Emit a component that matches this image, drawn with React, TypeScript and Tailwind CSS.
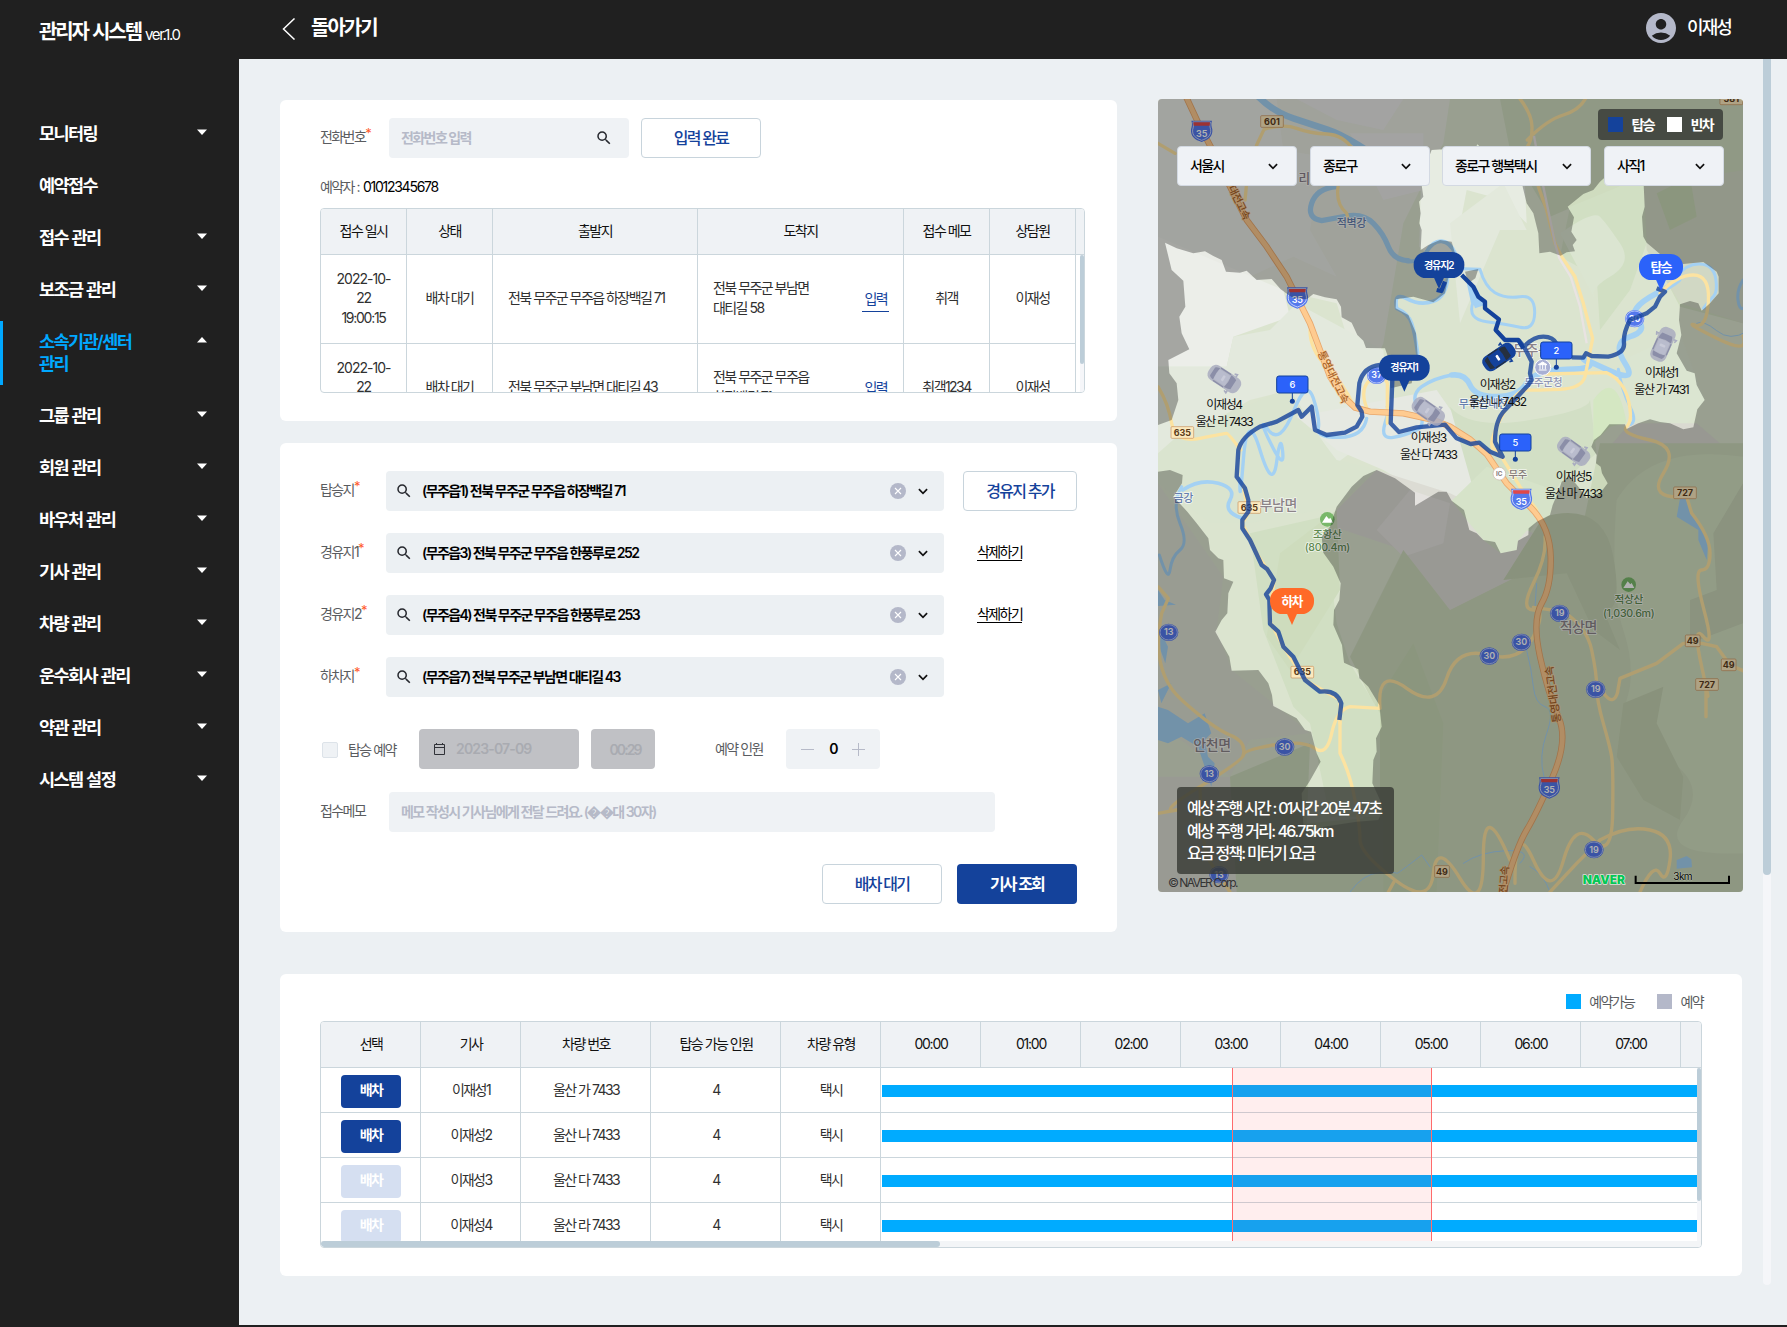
import React from "react";
import { MdAccountCircle, MdSearch } from "react-icons/md";

const MENU: { label: string; caret: boolean; active?: boolean }[] = [
  { label: "모니터링", caret: true },
  { label: "예약접수", caret: false },
  { label: "접수 관리", caret: true },
  { label: "보조금 관리", caret: true },
  { label: "소속기관/센터 관리", caret: true, active: true },
  { label: "그룹 관리", caret: true },
  { label: "회원 관리", caret: true },
  { label: "바우처 관리", caret: true },
  { label: "기사 관리", caret: true },
  { label: "차량 관리", caret: true },
  { label: "운수회사 관리", caret: true },
  { label: "약관 관리", caret: true },
  { label: "시스템 설정", caret: true },
];

function Sidebar() {
  return (
    <aside className="flex w-[239px] shrink-0 flex-col bg-[#202020] text-white">
      <div className="flex h-[108px] items-start pl-[39px] pt-[19px] leading-[26px]">
        <span className="text-[20px] font-semibold tracking-[-0.105em]! [word-spacing:0.06em]!">관리자 시스템</span>
        <span className="ml-1 pt-[3px] text-[15px] tracking-[-0.09em]!">ver.1.0</span>
      </div>
      <nav className="flex flex-col">
        {MENU.map((m) => (
          <div
            key={m.label}
            className={
              "my-[5px] flex border-l-[3px] py-[10px] pl-[36px] pr-[32px] " +
              (m.active ? "border-[#00a8ff]" : "border-transparent")
            }
          >
            <span
              className={
                "w-[110px] text-[17.5px] font-semibold leading-[22px] break-keep tracking-[-0.09em]! [word-spacing:0.04em]! " +
                (m.active ? "text-[#00a8ff]" : "text-white")
              }
            >
              {m.label}
            </span>
            {m.caret && (
              <svg viewBox="0 0 10 6" className="ml-auto mt-[6px] h-[6px] w-[10px]" fill="#fff">
                <path d={m.active ? "M0 5.5 5 0l5 5.5z" : "M0 .5h10L5 6z"} />
              </svg>
            )}
          </div>
        ))}
      </nav>
    </aside>
  );
}

function Header() {
  return (
    <header className="flex h-[59px] shrink-0 items-center bg-[#202020] pl-[43px] pr-[56px] text-white">
      <svg viewBox="0 0 14 22" className="-mt-[2px] h-[22px] w-[14px]" fill="none" stroke="#fff" strokeWidth="1.5">
        <path d="M12.5 .5 1.5 11l11 10.5" />
      </svg>
      <span className="-mt-[3px] ml-[15px] text-[20px] font-semibold leading-7 tracking-[-0.1em]!">돌아가기</span>
      <div className="-mt-[3px] ml-auto flex items-center gap-2">
        <MdAccountCircle className="size-[36px] text-[#b4b8c9]" />
        <span className="text-[18px] font-medium leading-7 tracking-[-0.105em]!">이재성</span>
      </div>
    </header>
  );
}

function Label({ text, star }: { text: string; star?: boolean }) {
  return (
    <span className="flex shrink-0 text-[14px] leading-5 text-[#5a5c60]">
      {text}
      {star && <span className="-mt-[4px] text-[13px] leading-5 text-[#ff5a2c]">*</span>}
    </span>
  );
}

function OutlineButton({ text, className }: { text: string; className: string }) {
  return (
    <button
      className={
        "flex h-10 items-center justify-center rounded border border-[#c8d4dc] bg-white pb-px text-[16px] font-medium leading-5 text-[#14429b] " +
        className
      }
    >
      {text}
    </button>
  );
}

function Chevron({ className = "" }: { className?: string }) {
  return (
    <svg viewBox="0 0 10 7" className={"h-[7px] w-[10px] shrink-0 " + className} fill="none" stroke="#111" strokeWidth="1.7">
      <path d="M.9 1.2 5 5.3l4.1-4.1" />
    </svg>
  );
}

const BOOKINGS = [
  { time: ["2022-10-", "22", "19:00:15"], from: "전북 무주군 무주읍 하장백길 71", to: ["전북 무주군 부남면", "대티길 58"], memo: "취객" },
  { time: ["2022-10-", "22", "19:00:15"], from: "전북 무주군 부남면 대티길 43", to: ["전북 무주군 무주읍", "하장백길 71"], memo: "취객1234" },
];

const BOOKING_GRID = "grid grid-cols-[86px_86px_205px_206px_86px_86px]";
const CELL = "flex items-center border-r border-[#cbd6dc] pb-0.5 text-[14px] leading-[19.6px]";

function CallerCard() {
  return (
    <section className="h-[321px] rounded-md bg-white pl-10 pt-[18px]">
      <div className="flex h-10 items-center">
        <div className="w-[69px] pb-[3px]">
          <Label text="전화번호" star />
        </div>
        <div className="flex h-10 w-60 items-center justify-between rounded bg-[#eff2f5] pl-3 pr-4">
          <span className="text-[14px] font-bold leading-5 text-[#b6bac8]">전화번호 입력</span>
          <MdSearch className="size-[18px] text-[#26282e]" />
        </div>
        <OutlineButton text="입력 완료" className="ml-3 w-[120px]" />
      </div>
      <p className="mt-[19px] flex text-[14px] leading-5 text-[#5a5c60]">
        예약자 :<span className="ml-[4px] text-black tracking-[-0.09em]!">01012345678</span>
      </p>
      <div className="mt-[11px] flex h-[185px] w-[765px] flex-col overflow-hidden rounded border border-[#cbd6dc]">
        <div className="flex h-[46px] shrink-0 border-b border-[#cbd6dc] bg-[#eff2f5]">
          <div className={BOOKING_GRID}>
            {["접수 일시", "상태", "출발지", "도착지", "접수 메모", "상담원"].map((h) => (
              <div key={h} className={CELL + " justify-center text-[#111]"}>
                {h}
              </div>
            ))}
          </div>
        </div>
        <div className="flex min-h-0 flex-1 overflow-hidden">
          <div className="text-[#303030]">
            {BOOKINGS.map((b, i) => (
              <div key={i} className={BOOKING_GRID + " h-[89px] border-b border-[#cbd6dc]"}>
                <div className={CELL + " flex-col justify-center"}>
                  {b.time.map((t) => (
                    <span key={t} className={t.endsWith("-") ? "tracking-[-0.07em]!" : "tracking-[-0.09em]!"}>
                      {t}
                    </span>
                  ))}
                </div>
                <div className={CELL + " justify-center"}>배차 대기</div>
                <div className={CELL + " pl-[15px]"}>{b.from}</div>
                <div className={CELL + " justify-between pl-[15px] pr-[14px]"}>
                  <span>
                    {b.to[0]}
                    <br />
                    {b.to[1]}
                  </span>
                  <span className="mt-[5px] border-b border-[#14429b] px-[2px] pb-[2px] text-[#14429b]">입력</span>
                </div>
                <div className={CELL + " justify-center"}>{b.memo}</div>
                <div className={CELL + " justify-center"}>이재성</div>
              </div>
            ))}
          </div>
          <div className="ml-auto h-full w-1 bg-[#f5f6f9]">
            <div className="h-[109px] w-1 rounded-sm bg-[#bccdd8]" />
          </div>
        </div>
      </div>
    </section>
  );
}

const STOPS = [
  { label: "탑승지", value: "(무주읍1) 전북 무주군 무주읍 하장백길 71", action: "add" },
  { label: "경유지1", value: "(무주읍3) 전북 무주군 무주읍 한풍루로 252", action: "del" },
  { label: "경유지2", value: "(무주읍4) 전북 무주군 무주읍 한풍루로 253", action: "del" },
  { label: "하차지", value: "(무주읍7) 전북 무주군 부남면 대티길 43", action: "" },
];

function TripCard() {
  return (
    <section className="h-[489px] rounded-md bg-white pl-10 pr-10 pt-7">
      <div className="flex flex-col gap-[22px]">
        {STOPS.map((s) => (
          <div key={s.label} className="flex h-10 items-center">
            <div className="w-[66px] pb-[3px]">
              <Label text={s.label} star />
            </div>
            <div className="flex h-10 w-[558px] items-center rounded bg-[#ecf0f3] pl-[9px] pr-4">
              <MdSearch className="size-[18px] text-[#26282e]" />
              <span className="ml-[9px] text-[14px] font-semibold leading-5 text-black">{s.value}</span>
              <svg viewBox="0 0 16 16" className="ml-auto size-4">
                <circle cx="8" cy="8" r="8" fill="#b4b8c9" />
                <path d="m5 5 6 6m0-6-6 6" stroke="#fff" strokeWidth="1.1" />
              </svg>
              <Chevron className="ml-3" />
            </div>
            {s.action === "add" && <OutlineButton text="경유지 추가" className="ml-[19px] w-[114px]" />}
            {s.action === "del" && (
              <span className="-mt-0.5 ml-[33px] border-b border-black text-[14px] leading-[17px] text-black">삭제하기</span>
            )}
          </div>
        ))}
      </div>
      <div className="mt-8 flex h-10 items-center">
        <span className="ml-[2px] mt-[2px] size-4 rounded-[2px] border border-[#dde3e9] bg-[#eff2f5]" />
        <div className="ml-[10px] w-[71px] pt-px">
          <Label text="탑승 예약" />
        </div>
        <div className="flex h-10 w-40 items-center rounded bg-[#c0c1c5] pl-[15px]">
          <svg viewBox="0 0 11 12" className="h-3 w-[11px]" fill="none" stroke="#303238" strokeWidth="1">
            <path d="M.5 1.5h10v10H.5zM.5 4.5h10M2.5 0v2M8.500 0v2" />
          </svg>
          <span className="ml-[11px] text-[14px] font-semibold leading-5 text-[#a9abb1] tracking-[-0.06em]!">2023-07-09</span>
        </div>
        <div className="ml-3 flex h-10 w-16 items-center justify-center rounded bg-[#c0c1c5] text-[14px] font-semibold text-[#a9abb1]">
          <span className="ml-1 tracking-[-0.14em]!">00:29</span>
        </div>
        <div className="ml-[60px] w-[71px]">
          <Label text="예약 인원" />
        </div>
        <div className="flex h-10 w-[94px] items-center justify-center gap-[15px] rounded bg-[#eff2f5]">
          <span className="h-px w-[13px] bg-[#b6bac8]" />
          <span className="text-[14px] font-semibold leading-5 text-black">0</span>
          <svg viewBox="0 0 13 13" className="size-[13px]" stroke="#b6bac8">
            <path d="M0 6.5h13M6.5 0v13" />
          </svg>
        </div>
      </div>
      <div className="mt-[23px] flex h-10 items-center">
        <div className="w-[69px] pb-[3px]">
          <Label text="접수메모" />
        </div>
        <div className="flex h-10 w-[606px] items-center rounded bg-[#eff2f5] pl-3">
          <span className="text-[14px] font-semibold leading-5 text-[#b6bac8]">
            메모 작성시 기사님에게 전달 드려요. (��대 30자)
          </span>
        </div>
      </div>
      <div className="mt-8 flex justify-end gap-[15px]">
        <OutlineButton text="배차 대기" className="w-[120px]" />
        <button className="flex h-10 w-[120px] items-center justify-center rounded bg-[#14429b] pb-px text-[16px] font-semibold leading-5 text-white">
          기사 조회
        </button>
      </div>
    </section>
  );
}

type Pt = { x: number; y: number };

function RoundBadge({ x, y, n }: Pt & { n: string }) {
  return (
    <g transform={`translate(${x} ${y})`}>
      <ellipse rx="29" ry="26" fill="#5478ec" />
      <ellipse rx="26" ry="23" fill="#5478ec" stroke="#dfe6ff" strokeWidth="2" />
      <text y="9" textAnchor="middle" fontSize="27" fontWeight="600" fill="#fff" className="tracking-normal!">
        {n}
      </text>
    </g>
  );
}

function RoadBadge({ x, y, n }: Pt & { n: string }) {
  const w = n.length === 3 ? 68 : 44;
  return (
    <g transform={`translate(${x} ${y})`}>
      <rect x={-w / 2} y="-17" width={w} height="35" rx="3" fill="#fbe9be" stroke="#c98f5a" strokeWidth="2" />
      <text y="10" textAnchor="middle" fontSize="27" fontWeight="700" fill="#5b3d1c" className="tracking-normal!">
        {n}
      </text>
    </g>
  );
}

function Shield({ x, y }: Pt) {
  return (
    <g transform={`translate(${x} ${y})`}>
      <path d="M-31-32h62c-4 10-1 18 1 26 2 22-12 32-32 38-20-6-34-16-32-38 2-8 5-16 1-26z" fill="#5478ec" />
      <path d="M-26-28h52c-3 9-1 16 1 23 2 18-10 26-27 32-17-6-29-14-27-32 2-7 4-14 1-23z" fill="#5478ec" stroke="#fff" strokeWidth="2" />
      <path d="M-25-27h50l-1 10h-48z" fill="#e04848" />
      <text y="16" textAnchor="middle" fontSize="27" fontWeight="600" fill="#fff" className="tracking-normal!">
        35
      </text>
    </g>
  );
}

function Place({ x, y, text, color, size = 34, halo = "#fff", rotate = 0 }: Pt & { text: string; color: string; size?: number; halo?: string; rotate?: number }) {
  return (
    <text
      transform={`translate(${x} ${y}) rotate(${rotate})`}
      textAnchor="middle"
      fontSize={size}
      fontWeight="500"
      fill={color}
      stroke={halo}
      strokeWidth="5"
      strokeLinejoin="round"
      paintOrder="stroke"
      strokeOpacity="0.7"
      className="tracking-[-0.03em]!"
    >
      {text}
    </text>
  );
}

function Mountain({ x, y, name, height }: Pt & { name: string; height: string }) {
  return (
    <g>
      <circle cx={x} cy={y} r="22" fill="#79b86a" />
      <path d={`M${x - 16} ${y + 10}l13-20 8 9 4-4 8 15z`} fill="#fff" />
      <Place x={x} y={y + 56} text={name} color="#5f8a52" size={32} />
      <Place x={x} y={y + 96} text={height} color="#5f8a52" size={32} />
    </g>
  );
}

function Car({ x, y, r, active, name, plate, lx, ly }: Pt & { r: number; active?: boolean; name: string; plate: string; lx: number; ly: number }) {
  const body = active ? "#14429b" : "#a9acc0";
  const glass = active ? "#26303f" : "#8b8ea8";
  const roof = active ? "#14429b" : "#b9bccd";
  return (
    <g>
      <g transform={`translate(${x} ${y}) rotate(${r})`}>
        <rect x="-53" y="-25" width="106" height="50" rx="19" fill={body} opacity={active ? 1 : 0.85} />
        <path d="M18-29l8-3v8M18 29l8 3v-8" stroke={body} strokeWidth="5" fill="none" />
        <path d="M12-21q16 2 20 5v32q-4 3-20 5 5-21 0-42z" fill={glass} />
        <path d="M-28-20q-12 2-14 6v28q2 4 14 6-4-20 0-40z" fill={glass} />
        <path d="M-26-22H10M-26 22H10" stroke={glass} strokeWidth="4" />
        <rect x="-28" y="-17" width="40" height="34" rx="5" fill={roof} />
        <rect x="-8" y="-9" width="8" height="18" rx="3" fill={active ? "#fff" : "#c9cbd9"} />
      </g>
      <text textAnchor="middle" fontSize="36" fill="#111">
        <tspan x={lx} y={ly}>
          {name}
        </tspan>
        <tspan x={lx} y={ly + 52}>
          {plate}
        </tspan>
      </text>
    </g>
  );
}

function Bubble({ x, y, w, color, text, size }: Pt & { w: number; color: string; text: string; size: number }) {
  return (
    <g>
      <path d={`M${x - 17} ${y + 34}h34l-17 38z`} fill={color} />
      <rect x={x - w / 2} y={y - 39} width={w} height="78" rx="37" fill={color} />
      <text x={x - 1} y={y + size * 0.37} textAnchor="middle" fontSize={size} fontWeight="600" fill="#fff">
        {text}
      </text>
    </g>
  );
}

function NumberPin({ x, y, n }: Pt & { n: string }) {
  return (
    <g>
      <path d={`M${x} ${y + 24}v28`} stroke="#14429b" strokeWidth="3" />
      <circle cx={x} cy={y + 50} r="7.500" fill="#14429b" />
      <rect x={x - 47} y={y - 26} width="94" height="51" rx="7" fill="#2b62fa" stroke="#14429b" strokeWidth="3" />
      <text x={x} y={y + 10} textAnchor="middle" fontSize="28" fontWeight="500" fill="#fff" className="tracking-normal!">
        {n}
      </text>
    </g>
  );
}

const REGION =
  "M45 458L80 475 130 490 165 484 190 498 215 510 228 545 270 548 290 542 320 570 365 567 392 598 430 625 470 628 490 612 525 622 560 628 573 650 575 682 605 698 622 735 640 752 648 774 705 775 712 795 722 895 785 880 803 795 798 730 775 675 737 655 738 628 790 620 850 637 885 610 893 572 915 490 905 455 870 450 835 465 812 480 815 420 808 400 812 370 807 335 820 320 815 285 822 240 845 180 877 178 978 172 982 163 992 172 1118 200 1118 290 1130 340 1150 370 1165 430 1168 490 1200 485 1232 497 1250 487 1275 484 1268 465 1280 450 1264 425 1272 382 1253 350 1300 312 1330 300 1350 275 1365 262 1480 262 1484 350 1476 380 1480 440 1490 458 1530 492 1600 522 1660 516 1700 545 1706 560 1706 610 1680 640 1655 662 1645 640 1620 633 1590 643 1587 690 1594 735 1580 790 1610 842 1634 850 1640 885 1664 930 1642 958 1630 1012 1600 1018 1560 1000 1530 996 1500 988 1465 1000 1430 1017 1425 1003 1378 1003 1352 1035 1332 1050 1324 1070 1340 1095 1338 1120 1352 1130 1356 1150 1373 1180 1350 1210 1310 1225 1285 1190 1260 1160 1235 1175 1225 1205 1208 1245 1200 1275 1160 1295 1136 1315 1135 1335 1104 1352 1100 1380 1052 1390 1035 1356 1000 1350 980 1330 958 1320 950 1290 942 1260 905 1232 890 1205 865 1205 795 1247 795 1208 735 1165 680 1140 640 1158 605 1190 560 1250 540 1310 515 1340 520 1388 550 1430 572 1480 568 1530 552 1560 550 1605 576 1665 582 1718 625 1738 628 1765 655 1790 688 1845 695 1910 678 1945 680 1985 670 2010 667 2080 690 2130 698 2160 685 2190 620 2195 520 2210 490 2245 460 2205 455 2110 478 2075 512 2015 500 1990 483 1925 465 1920 440 1885 370 1848 366 1815 355 1780 325 1740 245 1742 238 1700 215 1660 196 1625 215 1590 232 1570 235 1510 250 1475 222 1465 220 1410 205 1405 180 1380 175 1345 140 1300 112 1265 70 1220 96 1180 98 1155 60 1140 24 1145 24 1005 65 990 85 930 80 880 58 850 55 810 118 778 95 730 88 680 106 650 100 572 65 540z";

const RIVERS = [
  { w: 20, d: "M325 20Q370 65 430 85T530 118T625 165T690 220" },
  { w: 16, d: "M560 290Q500 295 485 340T515 392L590 378Q640 370 670 400T715 470T775 512" },
  { w: 12, d: "M770 514Q810 518 830 485T875 454T915 490" },
  { w: 11, d: "M893 560Q890 620 850 634T770 626T740 655Q775 670 785 700T803 790" },
  { w: 9, d: "M943 536L990 538Q1005 590 1035 608T1110 620T1154 668T1110 712T1010 695T968 640L955 580" },
  { w: 17, d: "M905 855Q945 850 960 885T1040 920T1130 880T1250 838T1310 815T1370 838T1425 820T1440 740T1462 690T1520 610T1580 560" },
  { w: 9, d: "M1580 560Q1610 520 1650 522T1697 565T1690 620T1660 655M1405 838Q1415 900 1440 950T1435 1005" },
  { w: 10, d: "M905 855Q850 865 815 890T805 960T800 1020T730 1042T705 1000T712 950M650 985Q640 1040 570 1042T505 1015T490 925T430 965T355 1020T362 1060T398 1085T380 1115T330 1080T280 1110T270 1165" },
  { w: 11, d: "M98 1200Q150 1165 205 1180T240 1230T272 1283" },
  { w: 9, d: "M95 1190Q65 1240 90 1300T90 1380T60 1440T28 1395M1779 570Q1760 600 1764 630T1779 655" },
  { w: 3, d: "M1790 725Q1740 755 1700 722T1640 700M1130 1680Q1145 1740 1150 1790T1185 1850T1190 1930T1182 2060M1160 1480L1155 1550M600 2406Q640 2350 690 2348T740 2350T815 2295L840 2330M1140 2330Q1180 2350 1200 2406M940 2320Q990 2285 1070 2282T1110 2320" },
];

const ROADS = [
  "M24 160L75 190M285 330L290 280 320 165 342 118Q400 100 440 115T530 132T610 180M565 285Q555 340 590 370L595 388",
  "M1105 20Q1145 70 1146 110T1132 170M1132 150Q1190 90 1240 75T1310 20M1165 290L1190 360 1215 460 1235 500 1275 560 1300 640 1328 745 1305 860Q1295 895 1230 898T1130 900T1050 990T1042 1080L1110 1190 1160 1260",
  "M1530 610Q1580 555 1630 555T1675 635T1635 705T1700 745T1779 738M1180 852L1370 848Q1420 870 1435 930T1430 1010T1500 1050T1540 1150T1610 1220L1625 1270Q1680 1340 1680 1390T1655 1440T1662 1560T1660 1640T1655 1730T1668 1800V1880",
  "M1779 1742L1740 1725 1700 1670 1655 1660 1600 1660 1520 1720 1410 1765 1402 1810Q1390 1845 1365 1815L1340 1775",
  "M1150 1552L1240 1565Q1310 1610 1325 1680T1340 1790T1360 1900T1385 2000T1388 2170T1330 2250T1240 2312T1150 2310T1095 2380",
  "M1200 2406L1280 2320 1350 2250Q1430 2205 1500 2220T1560 2310T1530 2350T1470 2406",
  "M1185 1340Q1190 1400 1150 1480T1150 1560T1150 1640T1015 1695T890 1765T770 1795T690 1855L600 1850Q560 1860 545 1930T495 1975T370 1965T280 1995T150 2090T80 2160L24 2170",
  "M570 1890V1990Q600 2050 615 2130T630 2250T735 2370T850 2350T930 2365T1000 2300T1080 2310M735 2370L715 2406M280 1995Q290 1955 240 1935T95 1830T35 1570L55 1525 24 1490M150 2090Q150 2200 170 2300L240 2406",
  "M24 890Q55 940 65 1000T150 1045T230 1030T272 1080M480 720Q480 780 530 830T610 945M655 965Q625 900 660 870T712 880V1000",
  "M280 1190L295 1270 277 1300 320 1390 372 1470 358 1590 400 1670 465 1770 570 1830V1900",
];

const MOTORWAY =
  "M108 20L150 110 182 170 230 270 290 390 350 470 410 560 440 620 480 700 510 780 540 860 580 920 615 953 660 965 760 970 850 990 900 1010 960 1048 1010 1092 1070 1180 1140 1250Q1200 1310 1202 1400T1175 1540T1170 1700T1225 1880T1208 2060T1130 2220T1060 2406";

const ROUTES = [
  "M568 1890L574 1840Q560 1798 510 1805L465 1770 430 1700 400 1670 385 1625 360 1602 358 1530 348 1513 362 1495 372 1470 352 1438 335 1425 300 1350 277 1315V1290L295 1265V1230L285 1195 260 1160 265 1080Q275 1040 330 1010L380 995 445 960 455 980 485 950 495 1020 530 1035 585 1028 620 1010 637 980 635 965 622 945 628 880Q640 830 690 825",
  "M727 870L722 1000 747 1026 800 1012 885 1004 920 1045 962 1062 988 1058 1020 1085 1058 1100 1035 1055Q1035 990 1065 960L1135 885 1145 870 1140 850 1145 815 1122 770 1105 750",
  "M1122 770Q1150 740 1180 740T1220 762M1265 802L1300 803 1308 790 1325 798 1375 800Q1425 790 1422 760T1440 690L1490 670 1515 650 1530 620 1545 605 1520 595",
];

function MapCanvas() {
  return (
    <svg viewBox="24 27 1755 2379" className="h-[793px] w-[585px]">
      <rect x="24" y="27" width="1755" height="2379" fill="#dbe4cf" />
      <path d="M24 27H900L880 160 760 400 700 760 640 900 560 640 430 610 24 560z" fill="#e5e9de" />
      <path d="M24 27H380L400 180 520 200 480 420 560 560 430 500 300 560 24 520z" fill="#e9ebe5" />
      <path d="M440 27H760L700 120 560 90zM600 130H820V300L700 330z" fill="#eaeae8" />
      <path d="M24 440L400 600 420 680 250 740 230 830 24 830z" fill="#eceee9" />
      <path d="M24 830L230 830 250 740 360 720 440 640 700 780 720 1000 560 1120 420 900 300 930 24 1090z" fill="#e3e9dd" />
      <path d="M24 1090L80 1040 400 900 560 1110 680 1140 560 1250 300 1300 180 1300 24 1180z" fill="#dae4cf" />
      <path d="M440 980L860 900 1000 1100 1080 1300 940 1280 700 1140 560 1080z" fill="#e6e9e2" />
      <path d="M815 180L1120 180 1130 400 1060 330 950 300 900 560 808 470z" fill="#e7ece2" />
      <path d="M900 400L1060 280 1130 420 1050 420 930 700z" fill="#e3e9dc" />
      <path d="M1050 27H1779V700L1590 650 1480 440 1480 260 1200 380 1080 180z" fill="#cfdcbf" />
      <path d="M1480 290L1779 240V700L1590 640 1490 480z" fill="#d1d8c4" />
      <path d="M1520 310L1620 260 1640 380 1560 420z" fill="#c8d7b5" />
      <path d="M1230 500L1260 350 1480 260 1490 460 1440 600 1350 720 1340 560z" fill="#d1dfc3" />
      <path d="M1230 430Q1330 360 1350 380T1410 460T1380 560T1340 640z" fill="#dbe5d1" />
      <path d="M900 950Q960 1020 1140 990T1320 930L1340 1090 1230 1180 1100 1390 1010 1340z" fill="#d2dfc5" />
      <path d="M1330 930Q1400 830 1430 1000L1380 1010 1330 1060z" fill="#d4e7c2" />
      <path d="M1440 800L1590 730 1664 930 1600 1018 1440 980z" fill="#dbe5d1" />
      <path d="M1440 1000L1640 1000 1779 1120V1260L1650 1120 1500 1180 1370 1080z" fill="#dadad1" />
      <path d="M520 1300L680 1140 900 1210 1150 1330 1120 1650 900 1660 760 1380z" fill="#dcdcd4" />
      <path d="M680 1320L780 1200 900 1240 880 1360 760 1400z" fill="#e4e2df" />
      <path d="M1350 1060H1779V2406H600L700 1900 600 1700 700 1500 760 1380 900 1560 1180 1420 1300 1300z" fill="#ccd9bb" />
      <path d="M1400 1230Q1380 1500 1420 1620T1430 1830 1540 2000 1600 2190 1779 2290V1100Q1500 1060 1400 1230z" fill="#d2e0c1" />
      <path d="M1180 1280Q1360 1230 1390 1400T1360 1560L1410 1680 1330 1620 1250 1450 1060 1470z" fill="#c5d2b3" />
      <path d="M1010 1130L1100 1160 1225 1205 1208 1245 1200 1275 1136 1315 1104 1352 1100 1380 1052 1390 1000 1350 950 1290 905 1232z" fill="#d6e3c9" />
      <path d="M1620 1530L1700 1500 1690 1330 1779 1180V1600L1620 1660z" fill="#c7d3b6" />
      <path d="M1420 1840L1540 1790 1520 1900 1600 2060 1590 2190 1480 2130 1400 2000z" fill="#c5d2b2" />
      <path d="M640 1900L790 1660 880 1900 860 2406H640z" fill="#c8d7b5" />
      <path d="M300 1330L520 1280 560 1600 600 1720 690 1870 690 2180 540 2180 480 1900 430 1850 340 1620z" fill="#d1dfc3" />
      <path d="M390 1390L560 1260 570 1500 420 1740 350 1640z" fill="#cedcbd" />
      <path d="M24 1400L150 1440V1540L24 1560z" fill="#dedad6" />
      <path d="M24 1180L220 1460 200 1620 245 1740 480 1930 300 1950 240 2060 24 1900z" fill="#dbe0d1" />
      <path d="M24 2060L240 2060 260 2406H24z" fill="#dcddd3" />
      <path d="M240 2060L480 1960 470 2200 700 2180 700 2406H260z" fill="#cbd9ba" />

      <g fill="none" stroke="#a4d1f3" strokeLinecap="round" strokeLinejoin="round">
        {RIVERS.map((r) => (
          <path key={r.d} d={r.d} strokeWidth={r.w} />
        ))}
      </g>
      <g fill="#a4d1f3">
        <path d="M24 1500l20 30 34 14-54 4zM24 1610l30 60-8 50-22-60zM24 1800l40-20-30 60zM24 1850l30 10 60 40 50-30 20 60-20 20 10 50 20 20-10 70-20-60-20-60-50-30-40 20-30-10-20-40z" />
        <path d="M1590 1225l-10 55 65 40 0 30 25 60 5-60-45-70-15-55z" />
        <path d="M1580 2310l30-12 14 10 2 24-46 4zM975 655l-20-60 20-10 30 60z" />
      </g>
      <g fill="none" stroke="#fce3a1" strokeWidth="10" strokeLinecap="round" strokeLinejoin="round">
        {ROADS.map((d) => (
          <path key={d} d={d} />
        ))}
      </g>
      <path d="M1152 138L1180 290 1215 460 1228 505 1262 560 1290 650 1310 760" fill="none" stroke="#e9e3e2" strokeWidth="7" />
      <path d={MOTORWAY} fill="none" stroke="#e8a76c" strokeWidth="19" />
      <path d={MOTORWAY} fill="none" stroke="#fecb90" strokeWidth="14" />

      <RoadBadge x={366} y={94} n="601" />
      <RoadBadge x={97} y={1027} n="635" />
      <RoadBadge x={298} y={1252} n="635" />
      <RoadBadge x={457} y={1746} n="635" />
      <RoadBadge x={1744} y={26} n="581" />
      <RoadBadge x={1605} y={1208} n="727" />
      <RoadBadge x={1671} y={1783} n="727" />
      <RoadBadge x={1628} y={1652} n="49" />
      <RoadBadge x={1736} y={1724} n="49" />
      <RoadBadge x={876} y={2344} n="49" />
      <Shield x={155} y={124} />
      <Shield x={442} y={624} />
      <Shield x={1114} y={1228} />
      <Shield x={1198} y={2094} />
      <RoundBadge x={680} y={856} n="37" />
      <RoundBadge x={1454} y={686} n="30" />
      <RoundBadge x={56} y={1627} n="13" />
      <RoundBadge x={404} y={1971} n="30" />
      <RoundBadge x={178} y={2052} n="13" />
      <RoundBadge x={207} y={2354} n="13" />
      <RoundBadge x={1229} y={1570} n="19" />
      <RoundBadge x={1114} y={1657} n="30" />
      <RoundBadge x={1018} y={1698} n="30" />
      <RoundBadge x={1337} y={1798} n="19" />
      <RoundBadge x={1332} y={2279} n="19" />
      <Place x={462} y={280} text="리" color="#8a7f88" size={38} />
      <Place x={604} y={412} text="적벽강" color="#667fae" size={33} />
      <Place x={100} y={1236} text="금강" color="#667fae" size={33} />
      <Place x={385} y={1260} text="부남면" color="#8c8488" size={42} />
      <Place x={186} y={1980} text="안천면" color="#8c8488" size={42} />
      <Place x={1285} y={1625} text="적상면" color="#8c8488" size={42} />
      <Place x={1145} y={796} text="무주읍" color="#8c8488" size={42} />
      <Place x={1180} y={888} text="무주군청" color="#8f95b5" size={32} />
      <Place x={1000} y={955} text="무주읍내천" color="#667fae" size={33} />
      <Place x={1103} y={1163} text="무주" color="#857a78" size={31} />
      <Mountain x={532} y={1288} name="조항산" height="(800.4m)" />
      <Mountain x={1436} y={1484} name="적상산" height="(1,030.6m)" />
      <Place x={258} y={342} text="대전고속" color="#a8632a" size={31} rotate={64} halo="#fed09a" />
      <Place x={540} y={866} text="통영대전고속" color="#a8632a" size={32} rotate={64} halo="#fed09a" />
      <Place x={1220} y={1812} text="통영대전고속" color="#a8632a" size={32} rotate={-98} halo="#fed09a" />
      <Place x={1073} y={2370} text="전고속" color="#a8632a" size={31} rotate={-86} halo="#fed09a" />
      <circle cx="1178" cy="832" r="24" fill="#a9b0d4" stroke="#fff" strokeWidth="3" />
      <path d="M1166 840h24M1170 838v-13M1178 838v-13M1186 838v-13M1165 824l13-8 13 8z" stroke="#fff" strokeWidth="3" fill="#fff" />
      <circle cx="1048" cy="1151" r="19" fill="#fff" stroke="#c7b3a8" strokeWidth="2" />
      <text x="1048" y="1158" textAnchor="middle" fontSize="19" fontWeight="700" fill="#857a78" className="tracking-normal!">
        IC
      </text>

      <path d={"M24 27H1779V2406H24z" + REGION + "M945 545L985 537 976 565 955 580z"} fill="#000" fillOpacity="0.3" fillRule="evenodd" />

      <g fill="none" stroke="#14429b" strokeWidth="13" strokeLinejoin="round">
        <g opacity="0.8">
          {ROUTES.map((d) => (
            <path key={d} d={d} />
          ))}
        </g>
        <path d="M860 600L874 603 885 575M935 555L970 590 985 620 1005 635V655L1047 688 1037 720 1065 750 1105 750 1120 775" />
      </g>

      <Car x={223} y={867} r={33} name="이재성4" plate="울산 라 7433" lx={222} ly={956} />
      <Car x={835} y={964} r={35} name="이재성3" plate="울산 다 7433" lx={835} ly={1055} />
      <Car x={1047} y={801} r={-34} active name="이재성2" plate="울산 나 7432" lx={1042} ly={896} />
      <Car x={1539} y={763} r={-66} name="이재성1" plate="울산 가 7431" lx={1534} ly={860} />
      <Car x={1271} y={1084} r={36} name="이재성5" plate="울산 마 7433" lx={1270} ly={1173} />

      <NumberPin x={427} y={884} n="6" />
      <NumberPin x={1219} y={782} n="2" />
      <NumberPin x={1096} y={1058} n="5" />
      <Bubble x={867} y={525} w={152} color="#14429b" text="경유지2" size={30} />
      <Bubble x={763} y={833} w={152} color="#14429b" text="경유지1" size={30} />
      <Bubble x={1533} y={531} w={132} color="#2b62fa" text="탑승" size={38} />
      <Bubble x={426} y={1533} w={132} color="#ff6a28" text="하차" size={38} />
      <text x="1298" y="2381" fontSize="35" fontWeight="900" fill="#06c755" stroke="#fff" strokeWidth="3" paintOrder="stroke" className="tracking-normal!" textLength="127" lengthAdjust="spacingAndGlyphs">
        NAVER
      </text>
      <path d="M1457 2357v22h280v-22" fill="none" stroke="#000" strokeWidth="6" />
      <text x="1598" y="2370" textAnchor="middle" fontSize="30" fill="#000" stroke="#c5cdbb" strokeWidth="2" paintOrder="stroke" className="tracking-[-0.06em]!">
        3km
      </text>
    </svg>
  );
}

const FILTERS = [
  { label: "서울시", width: "w-[120px]", gap: "" },
  { label: "종로구", width: "w-[120px]", gap: "ml-[13px]" },
  { label: "종로구 행복택시", width: "w-[149px]", gap: "ml-3" },
  { label: "사직1", width: "w-[120px]", gap: "ml-[13px]" },
];

function MapPanel() {
  return (
    <section className="relative -mt-px ml-[41px] h-[793px] w-[585px] shrink-0 overflow-hidden rounded">
      <MapCanvas />
      <div className="absolute right-5 top-[10px] flex h-[31px] items-center rounded bg-[#3a3c37]/85 pl-[10px] pr-[10px] text-[14px] font-semibold text-white">
        <span className="size-[15px] bg-[#14429b]" />
        <span className="ml-[8px] w-[36px] leading-5">탑승</span>
        <span className="size-[15px] bg-white" />
        <span className="ml-2 leading-5">빈차</span>
      </div>
      <div className="absolute left-[19px] top-[47px] flex">
        {FILTERS.map((f) => (
          <div
            key={f.label}
            className={`flex h-10 items-center justify-between rounded border border-[#d3d9e2] bg-[#eff2f6] pl-3 pr-[18px] ${f.width} ${f.gap}`}
          >
            <span className="text-[14px] font-medium leading-5 text-black">{f.label}</span>
            <Chevron />
          </div>
        ))}
      </div>
      <span className="absolute bottom-0 left-[10px] text-[12px] leading-[19px] text-[#333] tracking-[-0.13em]!">© NAVER Corp.</span>
      <div className="absolute left-[19px] top-[688px] h-[87px] w-[217px] rounded bg-[#363833]/80 pl-[10px] pt-[10px] text-[16px] font-medium leading-[22.5px] text-white">
        <p>예상 주행 시간 : 01시간 20분 47초</p>
        <p className="tracking-[-0.1em]!">예상 주행 거리: 46.75km</p>
        <p>요금 정책: 미터기 요금</p>
      </div>
    </section>
  );
}

const DRIVERS = [
  { name: "이재성1", plate: "울산 가 7433", on: true },
  { name: "이재성2", plate: "울산 나 7433", on: true },
  { name: "이재성3", plate: "울산 다 7433", on: false },
  { name: "이재성4", plate: "울산 라 7433", on: false },
];
const HOURS = ["00:00", "01:00", "02:00", "03:00", "04:00", "05:00", "06:00", "07:00"];
const DRIVER_GRID = "grid shrink-0 grid-cols-[100px_100px_130px_130px_100px]";
const DCELL = "flex items-center justify-center border-r border-[#cbd6dc] pl-px text-[14px] leading-5";

function DispatchCard() {
  return (
    <section className="mt-[42px] h-[302px] w-[1462px] rounded-md bg-white pl-10 pr-10 pt-5">
      <div className="flex h-[15px] items-center justify-end text-[14px] leading-5 text-[#5a5c60]">
        <span className="size-[15px] bg-[#00abff]" />
        <span className="ml-2 mr-[23px]">예약가능</span>
        <span className="size-[15px] bg-[#b4b8c9]" />
        <span className="ml-2 -mr-[1px]">예약</span>
      </div>
      <div className="mt-3 flex h-[227px] w-[1382px] flex-col overflow-hidden rounded border border-[#cbd6dc]">
        <div className="flex h-[46px] shrink-0 border-b border-[#cbd6dc] bg-[#eff2f5] text-[#111]">
          <div className={DRIVER_GRID}>
            {["선택", "기사", "차량 번호", "탑승 가능 인원", "차량 유형"].map((h) => (
              <div key={h} className={DCELL + " pb-0.5"}>
                {h}
              </div>
            ))}
          </div>
          {HOURS.map((h) => (
            <div key={h} className={DCELL + " w-[100px] pb-0.5"}>
              <span className="tracking-[-0.09em]!">{h}</span>
            </div>
          ))}
        </div>
        <div className="flex h-[173px]">
          <div className="relative w-[1376px] overflow-hidden text-[#303030]">
            {DRIVERS.map((d) => (
              <div key={d.name} className="flex h-[45px] border-b border-[#cbd6dc]">
                <div className={DRIVER_GRID}>
                  <div className={DCELL}>
                    <button
                      className={
                        "mt-0.5 h-[33px] w-[60px] rounded pb-0.5 text-[14px] font-semibold text-white " +
                        (d.on ? "bg-[#14429b]" : "bg-[#d5dff1]")
                      }
                    >
                      배차
                    </button>
                  </div>
                  <div className={DCELL}>{d.name}</div>
                  <div className={DCELL}>{d.plate}</div>
                  <div className={DCELL}>4</div>
                  <div className={DCELL}>택시</div>
                </div>
                <div className="ml-px mt-[17px] h-3 flex-1 bg-[#00abff]" />
              </div>
            ))}
            <div className="absolute inset-y-0 left-[911px] w-[200px] border-x border-[#ff6b6b] bg-[#ff4040]/9" />
          </div>
          <div className="h-full w-1 bg-[#f5f6f9]">
            <div className="h-[133px] w-1 rounded-sm bg-[#bccdd8]" />
          </div>
        </div>
        <div className="h-[6px] bg-[#f3f5f7]">
          <div className="h-[6px] w-[619px] rounded-full bg-[#bccdd8]" />
        </div>
      </div>
    </section>
  );
}

export default function App() {
  return (
    <div className="flex h-[1327px] w-[1787px] overflow-hidden bg-[#202020] font-['Inter','Noto_Sans_CJK_KR',sans-serif] whitespace-nowrap **:tracking-[-0.112em] **:[word-spacing:0.01em] [&_nav_span]:whitespace-normal">
      <Sidebar />
      <div className="flex flex-1 flex-col">
        <Header />
        <main className="flex h-[1266px] bg-[#ecf0f3] pr-4">
          <div className="flex-1 pl-[41px] pt-[41px]">
            <div className="flex">
              <div className="flex w-[837px] flex-col gap-[22px]">
                <CallerCard />
                <TripCard />
              </div>
              <MapPanel />
            </div>
            <DispatchCard />
          </div>
          <div className="h-[1226px] w-2 rounded-full bg-[#f5f6f9]">
            <div className="h-[816px] w-2 rounded-b-full bg-[#bccdd8]" />
          </div>
        </main>
      </div>
    </div>
  );
}
